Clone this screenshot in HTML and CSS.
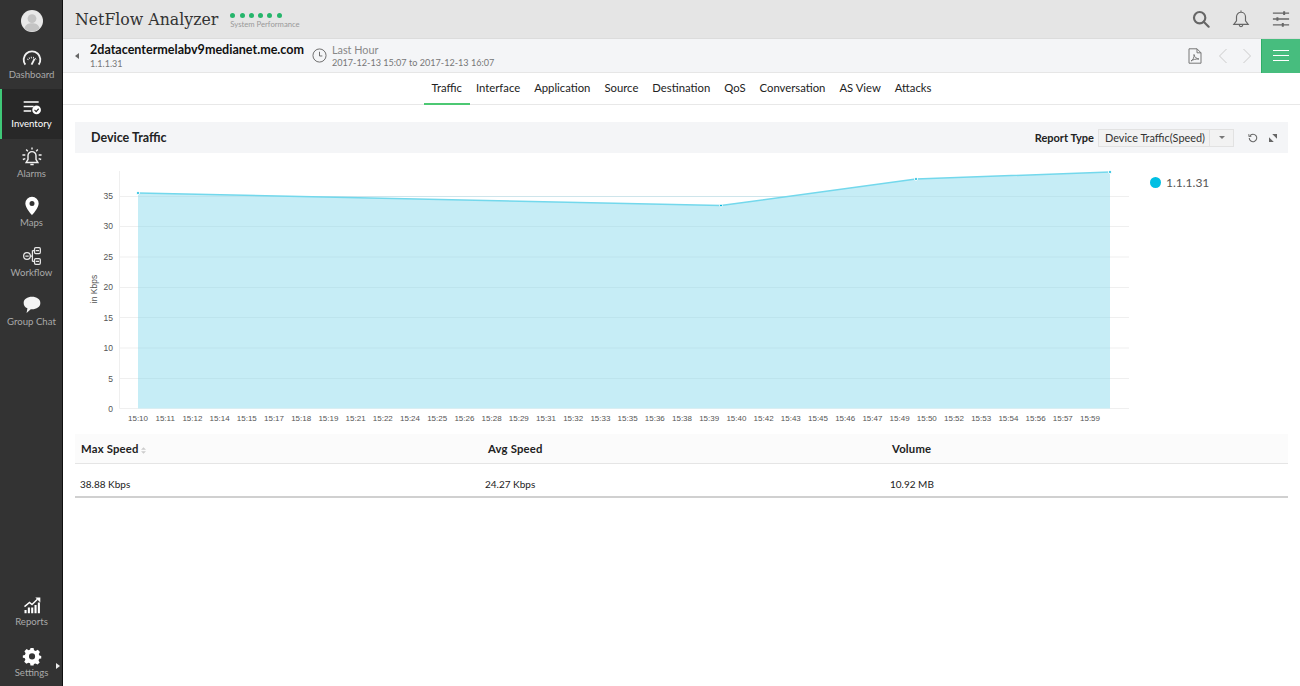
FILE: index.html
```html
<!DOCTYPE html>
<html lang="en">
<head>
<meta charset="utf-8">
<title>NetFlow Analyzer</title>
<link rel="stylesheet" href="styles.css">
</head>
<body>
<div class="app">
  <nav class="sidebar">
    <div class="avatar-wrap">
      <svg class="avatar" viewBox="0 0 22 22"><circle cx="11" cy="11" r="11" fill="#e9e9e9"/><circle cx="11" cy="8.6" r="4.4" fill="#c4c4c4"/><path d="M3.4 18.5c1-4 4-5.2 7.6-5.2s6.600 1.200 7.600 5.200A11 11 0 0 1 3.400 18.500z" fill="#c4c4c4"/></svg>
    </div>
    <a class="nav-item">
      <svg class="nav-icon" viewBox="0 0 24 24" fill="none" stroke="#f2f2f2"><path d="M4 20A10 10 0 1 1 20 20" stroke-width="2.200"/><path d="M6.800 14a6.500 6.500 0 0 1 10.400 0" stroke-dasharray="1 1.300" stroke-width="2"/><path d="M11.500 20l3.500-7" stroke-width="2.200"/></svg>
      <span>Dashboard</span>
    </a>
    <a class="nav-item active">
      <svg class="nav-icon" viewBox="0 0 24 24"><path d="M2 5h18v1.800H2zM2 10.500h12v1.800H2zM2 16h9v1.800H2z" fill="#fff"/><circle cx="17.500" cy="15.500" r="5.200" fill="#fff"/><path d="M15 15.500l2 2 3-3.400" fill="none" stroke="#2a2a2a" stroke-width="1.400"/></svg>
      <span>Inventory</span>
    </a>
    <a class="nav-item">
      <svg class="nav-icon" viewBox="0 0 24 24" fill="none" stroke="#f2f2f2" stroke-width="1.700"><path d="M12 5.500a4.800 4.800 0 0 0-4.800 4.800V15L5 18.500h14L16.800 15v-4.700A4.800 4.800 0 0 0 12 5.500z"/><path d="M10 21h4M12 .500v2.500M5 3l2 2M19 3l-2 2M.500 9.500h3.500M20 9.500h3.500M1 15l3-1M23 15l-3-1"/></svg>
      <span>Alarms</span>
    </a>
    <a class="nav-item">
      <svg class="nav-icon" viewBox="0 0 24 24"><path fill-rule="evenodd" d="M12 1a8 8 0 0 0-8 8c0 5.500 8 14 8 14s8-8.500 8-14a8 8 0 0 0-8-8zm0 5a3 3 0 1 1 0 6 3 3 0 0 1 0-6z" fill="#fff"/></svg>
      <span>Maps</span>
    </a>
    <a class="nav-item">
      <svg class="nav-icon" viewBox="0 0 24 24" fill="none" stroke="#e8e8e8" stroke-width="1.500"><circle cx="6" cy="12" r="4"/><rect x="15" y="2" width="7" height="7" rx="1.500"/><rect x="15" y="15" width="7" height="7" rx="1.500"/><path d="M10 12h2.500M12.500 5.500H15M12.500 18.500H15M12.500 5.500v13M4 12h4M16.500 5.500h4M16.500 18.500h4"/></svg>
      <span>Workflow</span>
    </a>
    <a class="nav-item">
      <svg class="nav-icon" viewBox="0 0 24 24"><path d="M12 2c5.500 0 10 2.800 10 7.500S17.500 17 12 17h-1.500l-5 4.500 1-5.500C3.500 14.800 2 12.500 2 9.500 2 4.800 6.500 2 12 2z" fill="#f4f4f4"/></svg>
      <span>Group Chat</span>
    </a>
    <div class="spacer"></div>
    <a class="nav-item">
      <svg class="nav-icon" viewBox="0 0 24 24"><path d="M3 14l6-5 3 2.500L18.500 5" fill="none" stroke="#fff" stroke-width="1.700"/><path d="M16 3h6v6z" fill="#fff"/><path d="M3 18h2.500v4H3zM7 15h2.500v7H7zM11 15h2.500v7H11zM15 12h2.500v10H15zM19 9h2.500v13H19z" fill="#fff"/></svg>
      <span>Reports</span>
    </a>
    <a class="nav-item">
      <svg class="nav-icon" viewBox="0 0 24 24"><path fill-rule="evenodd" fill="#fff" d="M10 2h4l.6 3 2.200 1 2.700-1.600 2.800 2.800L20.700 9.900l.9 2.100 2.400.6v3l-2.600.6-.9 2.100 1.500 2.600-2.800 2.800-2.700-1.500-2.100.8L14 25h-4l-.6-2.900-2.200-.9-2.600 1.500-2.800-2.800 1.500-2.600L2.400 15.200 0 14.700v-3l2.700-.6.900-2.200L2.100 6.200l2.800-2.800 2.600 1.600 2-.9zM12 9a4 4 0 1 0 0 8 4 4 0 0 0 0-8z" transform="translate(1 .5) scale(.92)"/></svg>
      <span>Settings</span>
      <i class="expand"></i>
    </a>
  </nav>

  <div class="main">
    <header class="topbar">
      <div class="brand">NetFlow Analyzer</div>
      <div class="perf">
        <div class="dots"><i></i><i></i><i></i><i></i><i></i><i></i></div>
        <div class="perf-label">System Performance</div>
      </div>
      <div class="top-actions">
        <svg class="top-icon" viewBox="0 0 20 20" fill="none" stroke="#666" stroke-width="2.400"><circle cx="8.500" cy="8.500" r="6.300"/><path d="M13 13l5.500 5.500" stroke-linecap="round"/></svg>
        <svg class="top-icon" viewBox="0 0 20 20" fill="none" stroke="#666" stroke-width="1.300"><path d="M10 2.500a5 5 0 0 0-5 5V12l-3 4h16l-3-4V7.500a5 5 0 0 0-5-5zM10 .500v2M8 16.500a2 2 0 0 0 4 0"/></svg>
        <svg class="top-icon" viewBox="0 0 20 20" fill="none" stroke="#666" stroke-width="1.500"><path d="M1 3.500h18M1 10h18M1 16.500h18"/><path d="M13.500 1.500v4M6 8v4M12 14.500v4" stroke-width="2.200"/></svg>
      </div>
    </header>

    <div class="subbar">
      <i class="back"></i>
      <div class="device">
        <div class="device-name">2datacentermelabv9medianet.me.com</div>
        <div class="device-ip">1.1.1.31</div>
      </div>
      <svg class="clock" viewBox="0 0 16 16" fill="none" stroke="#666" stroke-width="1"><circle cx="8" cy="8" r="7"/><path d="M8 4v4.500h3"/></svg>
      <div class="period">
        <div class="period-name">Last Hour</div>
        <div class="period-range">2017-12-13 15:07 to 2017-12-13 16:07</div>
      </div>
      <div class="sub-actions">
        <svg class="pdf" viewBox="0 0 14 16" fill="none" stroke="#777" stroke-width="1"><path d="M1 .800h8l4 4V15.200H1zM9 .800v4h4"/><path d="M3 13c2-1 3.500-4 3-6.500.5 3 2.500 4 5 4.500-3-.2-6 .5-8 2z"/></svg>
        <svg class="chev" viewBox="0 0 10 16" fill="none" stroke="#ccc" stroke-width="1"><path d="M8.500 1L1.500 8l7 7"/></svg>
        <svg class="chev" viewBox="0 0 10 16" fill="none" stroke="#ccc" stroke-width="1"><path d="M1.500 1l7 7-7 7"/></svg>
      </div>
      <button class="menu-btn" aria-label="Menu"><i></i><i></i><i></i></button>
    </div>

    <div class="tabs">
      <a class="tab active">Traffic</a>
      <a class="tab">Interface</a>
      <a class="tab">Application</a>
      <a class="tab">Source</a>
      <a class="tab">Destination</a>
      <a class="tab">QoS</a>
      <a class="tab">Conversation</a>
      <a class="tab">AS View</a>
      <a class="tab">Attacks</a>
    </div>

    <section class="panel">
      <div class="panel-head">
        <h2 class="panel-title">Device Traffic</h2>
        <div class="panel-tools">
          <span class="report-label">Report Type</span>
          <div class="select"><span class="select-val">Device Traffic(Speed)</span><span class="select-arrow"><i></i></span></div>
          <svg class="tool refresh" viewBox="0 0 12 12" fill="none" stroke="#666" stroke-width="1.300"><path d="M2.200 3.500A4.500 4.500 0 1 1 1.500 6"/><path d="M1 1.200v3h3" stroke-width="1"/></svg>
          <svg class="tool expand-icon" viewBox="0 0 8 8" fill="#666"><path d="M3.200 0H8v4.800zM0 3.200V8h4.800z"/></svg>
        </div>
      </div>

      <div class="chart-wrap">
        <svg class="chart" width="1075" height="281" viewBox="75 153 1075 281">
          <g class="grid">
            <path d="M119 196.500H1129M119 226.500H1129M119 257H1129M119 287.500H1129M119 317.500H1129M119 348H1129M119 378.500H1129"/>
            <path d="M119.500 171V408.500H1129"/>
          </g>
          <path class="area" d="M138 193L721 205.500L916 179L1110 172V408.500H138Z"/>
          <path class="grid-over" d="M138 196.500H1110M138 226.500H1110M138 257H1110M138 287.500H1110M138 317.500H1110M138 348H1110M138 378.500H1110"/>
          <path class="line" d="M138 193L721 205.500L916 179L1110 172"/>
          <g class="pts">
            <circle cx="138" cy="193" r="1.500"/><circle cx="721" cy="205.500" r="1.500"/><circle cx="916" cy="179" r="1.500"/><circle cx="1110" cy="172" r="1.500"/>
          </g>
          <g class="ylab" text-anchor="end">
            <text x="113" y="199">35</text><text x="113" y="229">30</text><text x="113" y="260">25</text><text x="113" y="290">20</text><text x="113" y="321">15</text><text x="113" y="351">10</text><text x="113" y="382">5</text><text x="113" y="412">0</text>
          </g>
          <text class="ytitle" transform="translate(97 289) rotate(-90)" text-anchor="middle">in Kbps</text>
          <g class="xlab" text-anchor="middle">
            <text x="138" y="421">15:10</text><text x="165.200" y="421">15:11</text><text x="192.400" y="421">15:12</text><text x="219.600" y="421">15:14</text><text x="246.800" y="421">15:15</text><text x="274" y="421">15:17</text><text x="301.200" y="421">15:18</text><text x="328.400" y="421">15:19</text><text x="355.600" y="421">15:21</text><text x="382.800" y="421">15:22</text><text x="410" y="421">15:24</text><text x="437.200" y="421">15:25</text><text x="464.400" y="421">15:26</text><text x="491.600" y="421">15:28</text><text x="518.800" y="421">15:29</text><text x="546" y="421">15:31</text><text x="573.200" y="421">15:32</text><text x="600.400" y="421">15:33</text><text x="627.600" y="421">15:35</text><text x="654.800" y="421">15:36</text><text x="682" y="421">15:38</text><text x="709.200" y="421">15:39</text><text x="736.400" y="421">15:40</text><text x="763.600" y="421">15:42</text><text x="790.800" y="421">15:43</text><text x="818" y="421">15:45</text><text x="845.200" y="421">15:46</text><text x="872.400" y="421">15:47</text><text x="899.600" y="421">15:49</text><text x="926.800" y="421">15:50</text><text x="954" y="421">15:52</text><text x="981.200" y="421">15:53</text><text x="1008.400" y="421">15:54</text><text x="1035.600" y="421">15:56</text><text x="1062.800" y="421">15:57</text><text x="1090" y="421">15:59</text>
          </g>
        </svg>
        <div class="legend"><i class="legend-dot"></i><span>1.1.1.31</span></div>
      </div>

      <table class="stats">
        <thead>
          <tr>
            <th class="c1">Max Speed <svg class="sort" viewBox="0 0 6 8"><path d="M3 0l3 3H0zM3 8L0 5h6z" fill="#ccc"/></svg></th>
            <th class="c2">Avg Speed</th>
            <th class="c3">Volume</th>
          </tr>
        </thead>
        <tbody>
          <tr><td>38.88 Kbps</td><td>24.27 Kbps</td><td>10.92 MB</td></tr>
        </tbody>
      </table>
    </section>
  </div>
</div>
</body>
</html>
```
FILE: styles.css
```css
* { box-sizing: border-box; }
html, body { margin: 0; height: 100%; overflow: hidden; }
body { font-family: Lato, "Open Sans", sans-serif; color: #222; background: #fff; }
.app { display: flex; height: 686px; }

.sidebar { width: 63px; flex: none; background: #333; border-right: 1px solid #111; display: flex; flex-direction: column; align-items: stretch; }
.avatar-wrap { height: 39.500px; display: flex; align-items: center; justify-content: center; padding: 2px 0 0 1px; }
.avatar { width: 22px; height: 22px; }
.nav-item { position: relative; height: 49.500px; flex: none; display: flex; flex-direction: column; align-items: center; justify-content: flex-end; color: #a9a9a9; font-size: 9.600px; line-height: 12px; padding: 0 0 8.500px 1px; }
.nav-icon { width: 20px; height: 20px; margin-bottom: 1px; }
.nav-item.active { background: #282828; color: #fff; box-shadow: inset 2px 0 0 #3fc878; }
.spacer { flex: 1; }
.sidebar > .nav-item:last-child { padding-bottom: 7.500px; }
.expand { position: absolute; right: 2px; top: 26px; border-left: 4px solid #eee; border-top: 3px solid transparent; border-bottom: 3px solid transparent; }

.main { flex: 1; min-width: 0; display: flex; flex-direction: column; }
.topbar { height: 39px; flex: none; background: #e5e5e5; border-bottom: 1px solid #dcdcdc; display: flex; align-items: center; padding-left: 12px; }
.brand { font-family: "DejaVu Serif", serif; font-stretch: condensed; font-size: 17.500px; color: #333; }
.perf { margin-left: 12px; padding-top: 2px; }
.dots { display: flex; gap: 4.300px; height: 7px; align-items: center; }
.dots i { width: 5px; height: 5px; border-radius: 50%; background: #26b56b; }
.perf-label { font-size: 7.700px; line-height: 9px; color: #999; margin-top: 1px; }
.top-actions { margin-left: auto; display: flex; align-items: center; gap: 22px; padding-right: 10px; }
.top-icon { width: 18px; height: 18px; display: block; }

.subbar { height: 34px; flex: none; background: #f4f5f7; border-bottom: 1px solid #e6e6e6; display: flex; align-items: center; padding-left: 12px; position: relative; }
.back { width: 0; border-right: 4px solid #666; border-top: 3px solid transparent; border-bottom: 3px solid transparent; margin-right: 11px; }
.device-name { font-size: 12.550px; line-height: 15px; font-weight: 700; color: #111; }
.device-ip { font-size: 9px; line-height: 12px; color: #777; margin-top: 1px; }
.clock { width: 15px; height: 15px; margin-left: 8px; margin-right: 5px; flex: none; }
.period-name { font-size: 10.800px; line-height: 13px; color: #888; }
.period-range { font-size: 9.100px; line-height: 12px; color: #777; margin-top: 1px; }
.sub-actions { margin-left: auto; display: flex; align-items: center; margin-right: 9px; }
.pdf { width: 14px; height: 16px; margin-right: 16px; }
.chev { width: 10px; height: 16px; margin-left: 14px; }
.pdf + .chev { margin-left: 0; }
.menu-btn { width: 39px; height: 34px; padding: 0; background: #47bd7e; border: 0; border-left: 1px solid #2fae68; display: flex; flex-direction: column; align-items: center; justify-content: center; gap: 4px; }
.menu-btn i { width: 16px; height: 1px; background: #fff; display: block; }

.tabs { height: 32px; flex: none; border-bottom: 1px solid #e8e8e8; display: flex; justify-content: center; }
.tab { font-size: 11.300px; line-height: 30px; padding: 0 7px; color: #222; height: 32px; }
.tab.active { border-bottom: 2px solid #4cc873; padding: 0 8px; margin: 0 -1px; }

.panel { padding: 17px 12px 0 12px; }
.panel-head { height: 31px; background: #f4f5f7; display: flex; align-items: center; padding-left: 16px; }
.panel-title { margin: 0; font-size: 12.500px; font-weight: 700; color: #222; }
.panel-tools { margin-left: auto; display: flex; align-items: center; }
.report-label { font-size: 11px; font-weight: 700; color: #222; margin: 0 4px 1px 0; }
.select { display: flex; height: 18px; width: 136px; background: #f2f2f2; border: 1px solid #e2e2e2; align-items: stretch; }
.select-val { flex: 1; font-size: 10.900px; line-height: 16px; padding-left: 6px; color: #333; white-space: nowrap; }
.select-arrow { width: 24px; border-left: 1px solid #e2e2e2; display: flex; align-items: center; justify-content: center; }
.select-arrow i { border-top: 3px solid #777; border-left: 3px solid transparent; border-right: 3px solid transparent; }
.tool { width: 10px; height: 10px; display: block; }
.refresh { margin-left: 14px; }
.expand-icon { margin-left: 11px; margin-right: 11px; width: 8px; height: 8px; }

.chart-wrap { height: 281px; position: relative; display: flex; }
.chart { display: block; flex: none; }
.grid path { fill: none; stroke: #efefef; stroke-width: 1; }
.grid-over { fill: none; stroke: #b7dde7; stroke-width: 1; opacity: .6; }
.area { fill: #c6edf6; }
.line { fill: none; stroke: #73d8ec; stroke-width: 1.500; }
.pts circle { fill: #00b5dc; stroke: #fff; stroke-width: 1; }
.ylab text, .xlab text { font-family: "Liberation Sans", sans-serif; fill: #555; }
.ylab text { font-size: 8.500px; }
.xlab text { font-size: 8px; }
.ytitle { font-family: "Liberation Sans", sans-serif; font-size: 8.500px; fill: #555; }
.legend { display: flex; align-items: center; height: 14px; margin-top: 22px; font-size: 12px; color: #555; }
.legend-dot { width: 11px; height: 11px; border-radius: 50%; background: #00bfe3; margin-right: 5px; }

.stats { width: 100%; border-collapse: collapse; table-layout: fixed; }
.stats th { height: 29px; background: #fbfbfb; border-bottom: 1px solid #e5e5e5; text-align: left; font-size: 11.300px; font-weight: 700; color: #222; padding: 0 0 0 6px; letter-spacing: .2px; }
.stats td { height: 34px; border-bottom: 2px solid #d0d0d0; font-size: 10px; color: #222; padding: 9px 0 0 5px; }
.stats .c1 { width: 405px; }
.stats .c2 { width: 405px; padding-left: 8px; }
.stats .c3 { padding-left: 7px; }
.sort { width: 5px; height: 7px; margin-left: -1px; vertical-align: -1px; }
```
